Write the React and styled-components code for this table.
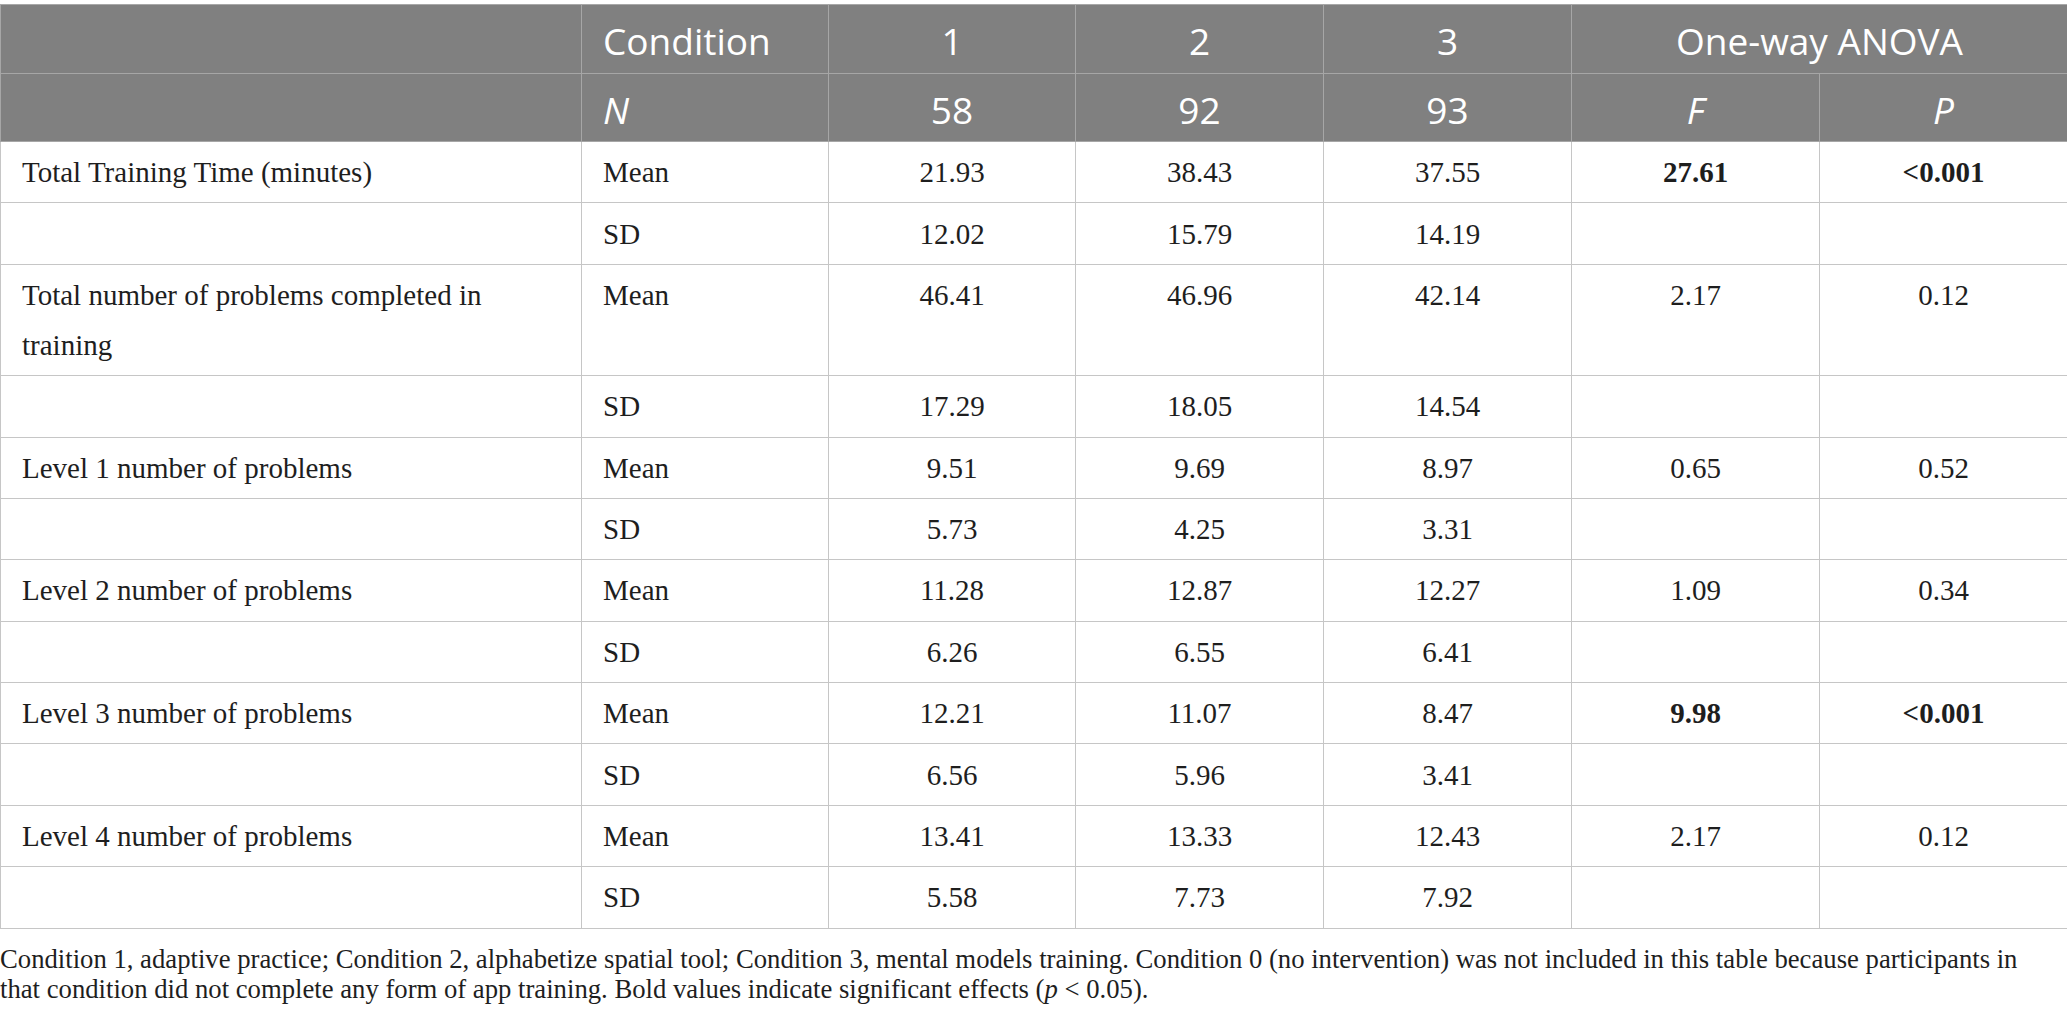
import React from "react";
import styled, { createGlobalStyle } from "styled-components";

const GlobalStyle = createGlobalStyle`
  html, body {
    margin: 0;
    padding: 0;
    background: #ffffff;
  }
`;

const Page = styled.div`
  padding-top: 4px;
  width: 2067px;
`;

const Table = styled.table`
  width: 2067px;
  border-collapse: collapse;
  table-layout: fixed;
  border-top: 1px solid #a8a8a8;
`;

const HeadRow = styled.tr`
  background: #808080;
`;

const HeadCell = styled.th`
  font-family: "Open Sans", "DejaVu Sans", sans-serif;
  font-size: 37px;
  font-weight: 400;
  font-style: ${(p) => (p.$italic ? "italic" : "normal")};
  color: #ffffff;
  text-align: ${(p) => p.$align || "center"};
  line-height: 58px;
  padding: 7px 21px 2.5px;
  border: 1px solid #a6a6a6;
  border-top: none;
`;

const BodyRow = styled.tr`
  background: #ffffff;
`;

const Cell = styled.td`
  font-family: "Liberation Serif", "Times New Roman", serif;
  font-size: 29px;
  font-weight: ${(p) => (p.$bold ? 700 : 400)};
  color: #1e1e1e;
  text-align: ${(p) => p.$align || "center"};
  vertical-align: top;
  line-height: 50px;
  padding: 5.2px 21px 5.2px;
  border: 1px solid #c6c6c6;
`;

const Footnote = styled.p`
  margin: 15px 0 0;
  max-width: 2040px;
  font-family: "Liberation Serif", "Times New Roman", serif;
  font-size: 26.7px;
  line-height: 30px;
  color: #1e1e1e;
`;

const cols = [581, 247, 247, 248, 248, 248, 248];

const rows = [
  { label: "Total Training Time (minutes)", stat: "Mean", v: ["21.93", "38.43", "37.55"], f: "27.61", p: "<0.001", bold: true },
  { label: "", stat: "SD", v: ["12.02", "15.79", "14.19"], f: "", p: "" },
  { label: "Total number of problems completed in training", stat: "Mean", v: ["46.41", "46.96", "42.14"], f: "2.17", p: "0.12" },
  { label: "", stat: "SD", v: ["17.29", "18.05", "14.54"], f: "", p: "" },
  { label: "Level 1 number of problems", stat: "Mean", v: ["9.51", "9.69", "8.97"], f: "0.65", p: "0.52" },
  { label: "", stat: "SD", v: ["5.73", "4.25", "3.31"], f: "", p: "" },
  { label: "Level 2 number of problems", stat: "Mean", v: ["11.28", "12.87", "12.27"], f: "1.09", p: "0.34" },
  { label: "", stat: "SD", v: ["6.26", "6.55", "6.41"], f: "", p: "" },
  { label: "Level 3 number of problems", stat: "Mean", v: ["12.21", "11.07", "8.47"], f: "9.98", p: "<0.001", bold: true },
  { label: "", stat: "SD", v: ["6.56", "5.96", "3.41"], f: "", p: "" },
  { label: "Level 4 number of problems", stat: "Mean", v: ["13.41", "13.33", "12.43"], f: "2.17", p: "0.12" },
  { label: "", stat: "SD", v: ["5.58", "7.73", "7.92"], f: "", p: "" },
];

export default function App() {
  return (
    <Page>
      <GlobalStyle />
      <Table>
        <colgroup>
          {cols.map((w, i) => (
            <col key={i} style={{ width: w }} />
          ))}
        </colgroup>
        <thead>
          <HeadRow>
            <HeadCell />
            <HeadCell $align="left">Condition</HeadCell>
            <HeadCell>1</HeadCell>
            <HeadCell>2</HeadCell>
            <HeadCell>3</HeadCell>
            <HeadCell colSpan={2}>One-way ANOVA</HeadCell>
          </HeadRow>
          <HeadRow>
            <HeadCell />
            <HeadCell $align="left" $italic>N</HeadCell>
            <HeadCell>58</HeadCell>
            <HeadCell>92</HeadCell>
            <HeadCell>93</HeadCell>
            <HeadCell $italic>F</HeadCell>
            <HeadCell $italic>P</HeadCell>
          </HeadRow>
        </thead>
        <tbody>
          {rows.map((r, i) => (
            <BodyRow key={i}>
              <Cell $align="left">{r.label}</Cell>
              <Cell $align="left">{r.stat}</Cell>
              {r.v.map((x, j) => (
                <Cell key={j}>{x}</Cell>
              ))}
              <Cell $bold={r.bold}>{r.f}</Cell>
              <Cell $bold={r.bold}>{r.p}</Cell>
            </BodyRow>
          ))}
        </tbody>
      </Table>
      <Footnote>
        Condition 1, adaptive practice; Condition 2, alphabetize spatial tool; Condition 3, mental models training.
        Condition 0 (no intervention) was not included in this table because participants in that condition did not
        complete any form of app training. Bold values indicate significant effects (<i>p</i> &lt; 0.05).
      </Footnote>
    </Page>
  );
}
